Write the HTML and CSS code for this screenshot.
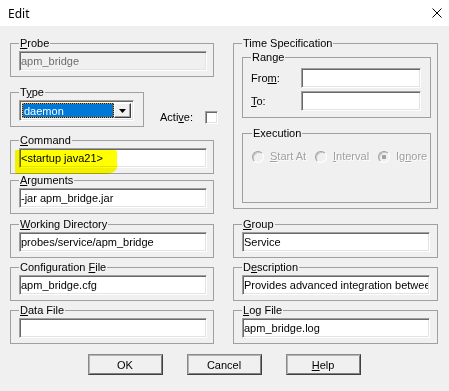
FILE: index.html
```html
<!DOCTYPE html>
<html lang="en">
<head>
    <meta charset="UTF-8">
    <meta name="viewport" content="width=device-width, initial-scale=1.0">
    <title>Edit</title>
    <link rel="stylesheet" href="styles.css">
</head>
<body>
    <div class="titlebar">
        <span class="title">Edit</span>
        <svg class="close" width="10" height="10" viewBox="0 0 10 10">
            <path d="M0.5 0.5 L9.5 9.5 M9.5 0.5 L0.5 9.5" stroke="#000" stroke-width="1" fill="none"/>
        </svg>
    </div>
    <div class="dialog">
        <div class="upper">
            <div class="column">
                <fieldset class="group">
                    <legend><u>P</u>robe</legend>
                    <input class="field" type="text" value="apm_bridge" disabled>
                </fieldset>
                <div class="type-row">
                    <fieldset class="group type-group">
                        <legend>T<u>y</u>pe</legend>
                        <div class="combo">
                            <span class="combo-value">daemon</span>
                            <span class="combo-button">
                                <svg width="7" height="4" viewBox="0 0 7 4"><polygon points="0,0 7,0 3.5,4" fill="#000"/></svg>
                            </span>
                        </div>
                    </fieldset>
                    <span class="active">Acti<u>v</u>e:</span>
                    <span class="checkbox"></span>
                </div>
                <fieldset class="group command">
                    <legend><u>C</u>ommand</legend>
                    <input class="field" type="text" value="<startup java21>">
                    <div class="highlight"></div>
                </fieldset>
                <fieldset class="group args">
                    <legend><u>A</u>rguments</legend>
                    <input class="field" type="text" value="-jar apm_bridge.jar">
                </fieldset>
            </div>
            <div class="column">
                <fieldset class="group time-spec">
                    <legend>Time Specification</legend>
                    <fieldset class="group range">
                        <legend>Range</legend>
                        <div class="range-grid">
                            <span>Fro<u>m</u>:</span>
                            <input class="field small" type="text" value="">
                            <span><u>T</u>o:</span>
                            <input class="field small" type="text" value="">
                        </div>
                    </fieldset>
                    <fieldset class="group execution">
                        <legend>Execution</legend>
                        <div class="radios">
                            <span class="radio-item"><span class="radio"></span><u>S</u>tart At</span>
                            <span class="radio-item"><span class="radio"></span><u>I</u>nterval</span>
                            <span class="radio-item"><span class="radio checked"></span>Ig<u>n</u>ore</span>
                        </div>
                    </fieldset>
                </fieldset>
            </div>
        </div>
        <div class="lower">
            <fieldset class="group">
                <legend><u>W</u>orking Directory</legend>
                <input class="field" type="text" value="probes/service/apm_bridge">
            </fieldset>
            <fieldset class="group right">
                <legend><u>G</u>roup</legend>
                <input class="field" type="text" value="Service">
            </fieldset>
            <fieldset class="group">
                <legend>Configuration <u>F</u>ile</legend>
                <input class="field" type="text" value="apm_bridge.cfg">
            </fieldset>
            <fieldset class="group right">
                <legend>D<u>e</u>scription</legend>
                <input class="field" type="text" value="Provides advanced integration between">
            </fieldset>
            <fieldset class="group">
                <legend><u>D</u>ata File</legend>
                <input class="field" type="text" value="">
            </fieldset>
            <fieldset class="group right">
                <legend><u>L</u>og File</legend>
                <input class="field" type="text" value="apm_bridge.log">
            </fieldset>
        </div>
        <div class="buttons">
            <button class="btn">OK</button>
            <button class="btn">Cancel</button>
            <button class="btn"><u>H</u>elp</button>
        </div>
    </div>
</body>
</html>
```

FILE: styles.css
```css
* {
    box-sizing: border-box;
}
body {
    margin: 0;
    background: #f0f0f0;
    font-family: "Liberation Sans", Arial, sans-serif;
    font-size: 11px;
    color: #000;
}
.titlebar {
    height: 26px;
    background: #fff;
    display: flex;
    align-items: center;
    justify-content: space-between;
    padding: 0 7px 0 8px;
}
.title {
    font-family: "Noto Sans", sans-serif;
    font-size: 12px;
}
.dialog {
    padding: 11px 11px 0 10px;
}
.upper, .lower {
    display: grid;
    grid-template-columns: 204px 205px;
    column-gap: 19px;
}
.lower {
    margin-top: 4px;
    row-gap: 3px;
}
fieldset.group {
    margin: 0;
    padding: 2px 6px 5px 8px;
    border: 1px solid #a0a0a0;
    min-width: 0;
}
fieldset.right {
    padding-right: 7px;
}
legend {
    padding: 0 1px;
    line-height: 12px;
}
.field {
    display: block;
    width: 188px;
    height: 20px;
    margin: 0;
    padding: 0 1px;
    font: inherit;
    color: #000;
    background: #fff;
    border: 1px solid;
    border-color: #a0a0a0 #fff #fff #a0a0a0;
    box-shadow: inset 1px 1px #696969, inset -1px -1px #e3e3e3;
    outline: none;
}
.field:disabled {
    background: #f0f0f0;
    color: #6d6d6d;
}
.field.small {
    width: 120px;
}

/* type row */
.type-row {
    display: flex;
    align-items: flex-end;
    margin: 9px 0 7px;
}
.type-group {
    width: 134px;
    flex-shrink: 0;
}
.combo {
    display: flex;
    width: 115px;
    height: 21px;
    padding: 2px;
    background: #fff;
    border: 1px solid;
    border-color: #a0a0a0 #fff #fff #a0a0a0;
    box-shadow: inset 1px 1px #696969, inset -1px -1px #e3e3e3;
}
.combo-value {
    flex: 1;
    color: #fff;
    padding-left: 1px;
    line-height: 15px;
    border: 1px dotted #f39a2c;
    background: linear-gradient(#0078d7, #0078d7) padding-box, #1a1a1a;
}
.combo-button {
    width: 17px;
    display: flex;
    align-items: center;
    justify-content: center;
    background: #f0f0f0;
    border: 1px solid;
    border-color: #fff #404040 #404040 #fff;
    box-shadow: inset -1px -1px #a0a0a0;
}
.active {
    margin: 0 0 3px 16px;
    line-height: 13px;
    flex-shrink: 0;
}
.checkbox {
    width: 13px;
    height: 13px;
    margin: 0 0 3px 12px;
    flex-shrink: 0;
    background: #fff;
    border: 1px solid;
    border-color: #a0a0a0 #fff #fff #a0a0a0;
    box-shadow: inset 1px 1px #696969, inset -1px -1px #e3e3e3;
}

/* command highlight */
.command {
    position: relative;
}
.args {
    margin-top: 3px;
}
.highlight {
    position: absolute;
    left: 4px;
    top: 4px;
    width: 102px;
    height: 24px;
    background: #ffff00;
    mix-blend-mode: multiply;
    border-radius: 1px 2px 12px 2px / 1px 2px 7px 2px;
}

/* time specification */
.time-spec {
    padding: 8px 7px 2px 9px;
}
fieldset.range {
    padding: 5px 7px 6px 8px;
}
.range-grid {
    display: grid;
    grid-template-columns: 50px 120px;
    row-gap: 3px;
    align-items: center;
}
fieldset.execution {
    margin-top: 9px;
    height: 76px;
    padding: 11px 8px 0 9px;
}
.radios {
    display: grid;
    grid-template-columns: 63px 63px 63px;
}
.radio-item {
    display: flex;
    align-items: center;
    line-height: 13px;
    color: #a0a0a0;
    text-shadow: 1px 1px #fff;
}
.radio {
    width: 12px;
    height: 12px;
    margin-right: 6px;
    border-radius: 50%;
    background: #f0f0f0;
    border: 1px solid;
    border-color: #a0a0a0 #fff #fff #a0a0a0;
    box-shadow: inset 1px 1px #c8c8c8;
}
.radio.checked {
    background: radial-gradient(circle, #a0a0a0 0, #a0a0a0 2px, #f0f0f0 2.5px);
}

/* buttons */
.buttons {
    display: flex;
    justify-content: center;
    gap: 24px;
    margin-top: 10px;
}
.btn {
    width: 75px;
    height: 21px;
    padding: 0;
    font: inherit;
    color: #000;
    background: #f0f0f0;
    border: 1px solid;
    border-color: #8a8a8a #404040 #404040 #8a8a8a;
    box-shadow: inset 1px 1px #b4b4b4, inset -1px -1px #808080;
}
```
